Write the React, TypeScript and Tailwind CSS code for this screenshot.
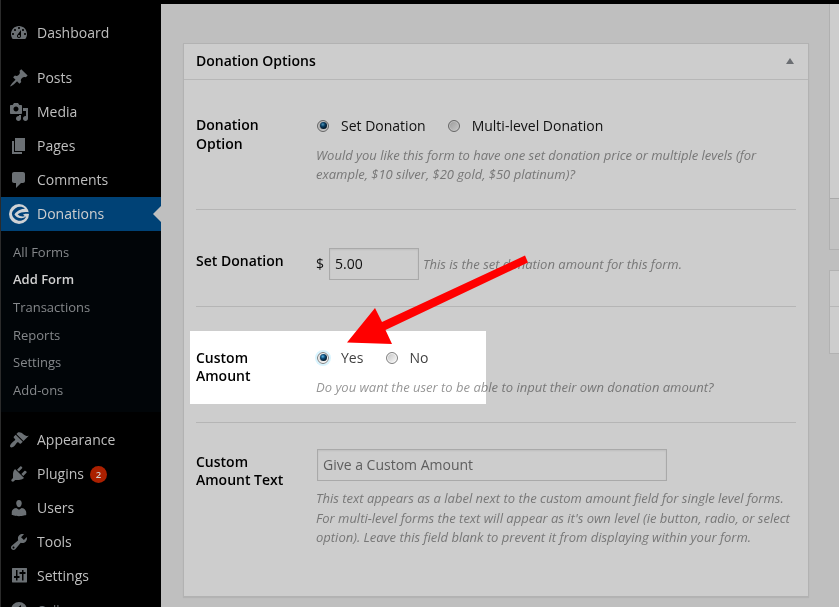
import type { ReactNode } from 'react';

const icons = {
  dashboard:
    'M3.76 16h12.48c1.1-1.37 1.76-3.11 1.76-5 0-4.42-3.58-8-8-8s-8 3.58-8 8c0 1.89.66 3.63 1.76 5zM10 4c.55 0 1 .45 1 1s-.45 1-1 1-1-.45-1-1 .45-1 1-1zM6 6c.55 0 1 .45 1 1s-.45 1-1 1-1-.45-1-1 .45-1 1-1zm8 0c.55 0 1 .45 1 1s-.45 1-1 1-1-.45-1-1 .45-1 1-1zm-5.37 5.55L12 7v6c0 1.1-.9 2-2 2s-2-.9-2-2c0-.57.24-1.08.63-1.45zM4 10c.55 0 1 .45 1 1s-.45 1-1 1-1-.45-1-1 .45-1 1-1zm12 0c.55 0 1 .45 1 1s-.45 1-1 1-1-.45-1-1 .45-1 1-1zm-5 3c0-.55-.45-1-1-1s-1 .45-1 1 .45 1 1 1 1-.45 1-1z',
  posts:
    'M10.44 3.02l1.82-1.82 6.36 6.35-1.83 1.82c-1.05-.68-2.48-.57-3.41.36l-.75.75c-.92.93-1.04 2.35-.35 3.41l-1.83 1.82-2.41-2.41-2.8 2.79c-.42.42-3.38 2.71-3.8 2.29s1.86-3.39 2.28-3.81l2.79-2.79L4.1 9.36l1.83-1.82c1.05.69 2.48.57 3.4-.36l.75-.75c.93-.92 1.05-2.35.36-3.41z',
  media:
    'M13 11V4c0-.55-.45-1-1-1h-1.67L9 1H5L3.67 3H2c-.55 0-1 .45-1 1v7c0 .55.45 1 1 1h10c.55 0 1-.45 1-1zM7 4.5c1.38 0 2.5 1.12 2.5 2.5S8.38 9.5 7 9.5 4.5 8.38 4.5 7 5.62 4.5 7 4.5zM14 6h5v10.5c0 1.38-1.12 2.5-2.5 2.5S14 17.88 14 16.5s1.12-2.5 2.5-2.5c.17 0 .34.02.5.05V9h-3V6zm-4 8.05V13h2v3.5c0 1.38-1.12 2.5-2.5 2.5S7 17.88 7 16.5 8.12 14 9.5 14c.17 0 .34.02.5.05z',
  pages: 'M6 15V2h10v13H6zm-1 1h8v2H3V5h2v11z',
  comments:
    'M5 2h9c1.1 0 2 .9 2 2v7c0 1.1-.9 2-2 2h-2l-5 5v-5H5c-1.1 0-2-.9-2-2V4c0-1.1.9-2 2-2z',
  appearance:
    'M14.48 11.06L7.41 3.99l1.5-1.5c.5-.56 2.3-.47 3.51.32 1.21.8 1.43 1.28 2.91 2.1 1.18.64 2.45 1.26 4.45.85zm-.71.71L6.7 4.7 4.93 6.47c-.39.39-.39 1.02 0 1.41l1.06 1.06c.39.39.39 1.03 0 1.42-.6.6-1.43 1.11-2.21 1.69-.35.26-.7.53-1.01.84C1.43 14.23.4 16.08 1.4 17.07c.99 1 2.84-.03 4.18-1.36.31-.31.58-.66.85-1.02.57-.78 1.08-1.61 1.69-2.21.39-.39 1.02-.39 1.41 0l1.06 1.06c.39.39 1.02.39 1.41 0z',
  plugins:
    'M13.11 4.36L9.87 7.6 8 5.73l3.24-3.24c.35-.34 1.05-.2 1.56.32.52.51.66 1.21.31 1.55zm-8 1.77l.91-1.12 9.01 9.01-1.19.84c-.71.71-2.63 1.16-3.82 1.16H6.14L4.9 17.26c-.59.59-1.54.59-2.12 0-.59-.58-.59-1.53 0-2.12l1.24-1.24v-3.88c0-1.13.4-3.19 1.09-3.89zm7.26 3.97l3.24-3.24c.34-.35 1.04-.21 1.55.31.52.51.66 1.21.31 1.55l-3.24 3.25z',
  users:
    'M10 9.25c-2.27 0-2.73-3.44-2.73-3.44C7 4.02 7.82 2 9.97 2c2.16 0 2.98 2.02 2.71 3.81 0 0-.41 3.44-2.68 3.44zm0 2.57L12.72 10c2.39 0 4.52 2.33 4.52 4.53v2.49s-3.65 1.13-7.24 1.13c-3.65 0-7.24-1.13-7.24-1.13v-2.49c0-2.25 1.94-4.48 4.47-4.48z',
  tools:
    'M16.68 9.77c-1.34 1.34-3.3 1.67-4.95.99l-5.41 6.52c-.99.99-2.59.99-3.58 0s-.99-2.59 0-3.57l6.52-5.42c-.68-1.65-.35-3.61.99-4.95 1.28-1.28 3.12-1.62 4.72-1.06l-2.89 2.89 2.82 2.82 2.86-2.87c.53 1.58.18 3.39-1.08 4.65zM3.81 16.21c.4.39 1.04.39 1.43 0 .4-.4.4-1.04 0-1.43-.39-.4-1.03-.4-1.43 0-.39.39-.39 1.03 0 1.43z',
  settings:
    'M3.500 2h14c.28 0 .5.22.5.5v13.500c0 .28-.22.5-.5.5h-14c-.28 0-.5-.22-.5-.5V2.500c0-.28.22-.5.5-.5zM7 4v6H5v2h2v2.500h1.500V12h2v-2h-2V4zM13 4v2h-2.500v2H13v6.500h1.500V8h2V6h-2V4z',
  collapse: 'M10 2a8 8 0 1 1 0 16 8 8 0 0 1 0-16zM12 5l-6 5 6 5z',
};

function Glyph({ d }: { d: string }) {
  return (
    <svg viewBox="0 0 20 20" className="h-5 w-5 shrink-0 fill-[#6b7074]">
      <path fillRule="evenodd" d={d} />
    </svg>
  );
}

function GiveLogo() {
  return (
    <svg viewBox="0 0 20 20" className="h-5 w-5 shrink-0">
      <circle cx="10" cy="10" r="10" fill="#cfd2d5" />
      <path
        d="M16 4.800C13.500 2.400 9.500 2.200 6.500 4.200 3.500 6.200 2.300 9 3.200 11.300 4.500 14.800 8 17.300 12 16.700 14.500 16.300 16.500 14.500 17.200 12.300 15 14.500 11.500 14.800 8.800 13.500 6.800 12.500 5.700 11.300 5.500 10.300 6.800 8 9.300 6.200 12 5.400 13.500 5 15 4.900 16 4.800z"
        fill="#00427a"
      />
      <path d="M20 8.300C15.500 7.700 11.500 8.300 8.700 10.200 10.500 12.300 13.500 12.900 16.300 12 15.500 11.800 14.500 11.200 14 10.400 16 9.900 18 9.800 20 9.900z" fill="#00427a" />
    </svg>
  );
}

function MenuItem({ icon, label, badge }: { icon: string; label: string; badge?: string }) {
  return (
    <li className="flex h-[34px] items-center gap-2 pl-2 text-[14px] leading-[18px] text-[#bfbfbf]">
      <Glyph d={icon} />
      <span>{label}</span>
      {badge && (
        <span className="-ml-0.5 flex h-[17px] w-[17px] items-center justify-center rounded-full bg-[#ab2000] text-[9.5px] leading-[17px] font-semibold text-[#d0d0d0]">
          {badge}
        </span>
      )}
    </li>
  );
}

function Radio({ checked, glow }: { checked?: boolean; glow?: boolean }) {
  return (
    <span
      className={
        'flex h-3 w-3 shrink-0 items-center justify-center rounded-full border border-[#666] bg-linear-to-br from-[#999] to-[#cacaca] shadow-[inset_0_0_0_1px_#c4c4c4] ' +
        (glow ? 'outline-2 outline-[#86b5cc]/45' : '')
      }
    >
      {checked && (
        <span className="h-[7px] w-[7px] rounded-full bg-[radial-gradient(circle_at_40%_35%,#4a93b8_0%,#083c60_35%,#000c16_80%)]" />
      )}
    </span>
  );
}

function Row({ label, className, children }: { label: ReactNode; className: string; children: ReactNode }) {
  return (
    <div className={'mx-3 flex ' + className}>
      <div className="w-[120px] shrink-0 text-[14px] leading-[18.2px] font-semibold text-black">{label}</div>
      <div className="min-w-0 flex-1 text-[14px] leading-[19px] text-[#111]">{children}</div>
    </div>
  );
}

const subItems = ['All Forms', 'Add Form', 'Transactions', 'Reports', 'Settings', 'Add-ons'];

export default function App() {
  return (
    <div className="relative flex h-[607px] w-[839px] overflow-hidden bg-black font-['Open_Sans','Noto_Sans',sans-serif]">
      <nav className="h-full w-[161px] shrink-0 border-l border-[#2b2b2b] bg-black pt-4">
        <ul>
          <MenuItem icon={icons.dashboard} label="Dashboard" />
          <li className="h-[11px]" />
          <MenuItem icon={icons.posts} label="Posts" />
          <MenuItem icon={icons.media} label="Media" />
          <MenuItem icon={icons.pages} label="Pages" />
          <MenuItem icon={icons.comments} label="Comments" />
          <li>
            <div className="flex h-[34px] items-center gap-2 bg-[#004276] pl-2 text-[14px] leading-[18px] text-[#cfcfcf]">
              <GiveLogo />
              <span className="flex-1">Donations</span>
              <span className="h-0 w-0 border-y-8 border-r-8 border-y-transparent border-r-[#bfbfbf]" />
            </div>
            <ul className="h-[181px] bg-[#010508] pt-[7px] pl-3">
              {subItems.map((t) => (
                <li
                  key={t}
                  className={
                    'text-[13px] leading-[28px] ' +
                    (t === 'All Forms' || t === 'Reports' ? 'h-[27px] ' : 'h-7 ') +
                    (t === 'Add Form' ? 'font-semibold text-[#d0d0d0]' : 'text-[#85888b]')
                  }
                >
                  {t}
                </li>
              ))}
            </ul>
          </li>
          <li className="h-[11px]" />
          <MenuItem icon={icons.appearance} label="Appearance" />
          <MenuItem icon={icons.plugins} label="Plugins" badge="2" />
          <MenuItem icon={icons.users} label="Users" />
          <MenuItem icon={icons.tools} label="Tools" />
          <MenuItem icon={icons.settings} label="Settings" />
          <li className="flex h-[33px] items-center gap-2 pl-2 text-[13px] leading-[18px] text-[#6b7074]">
            <Glyph d={icons.collapse} />
            <span>Collapse menu</span>
          </li>
        </ul>
      </nav>

      <main className="mt-1 flex flex-1 bg-[#bfbfbf] pl-[22px]">
        <section className="mt-[39px] h-[554px] w-[626px] shrink-0 border border-[#b2b2b2] bg-[#cdcdcd] shadow-[0_1px_1px_rgba(0,0,0,.06)]">
          <header className="flex h-9 items-center justify-between border-b border-[#b7b7b7] pr-[14px] pb-px pl-3">
            <h2 className="text-[14px] leading-[18px] font-semibold text-black">Donation Options</h2>
            <span className="h-0 w-0 border-x-4 border-b-[6px] border-x-transparent border-b-[#6b6e72]" />
          </header>

          <Row
            className="h-[130px] border-b border-[#b5b5b5] pt-9"
            label={
              <>
                <span className="block h-[19px]">Donation</span>
                <span className="block">Option</span>
              </>
            }
          >
            <div className="flex items-center pl-px">
              <Radio checked />
              <span className="ml-3">Set Donation</span>
              <span className="ml-[22px]"><Radio /></span>
              <span className="ml-3">Multi-level Donation</span>
            </div>
            <p className="mt-[11px] text-[13px] text-[#777] italic">
              Would you like this form to have one set donation price or multiple levels (for
              <br />
              example, $10 silver, $20 gold, $50 platinum)?
            </p>
          </Row>

          <Row className="h-[97px] border-b border-[#b5b5b5] pt-[42px]" label="Set Donation">
            <div className="-mt-1 flex items-center">
              <span className="w-[13px] pb-0.5">$</span>
              <span className="flex h-8 w-[90px] items-center border border-[#a9a9a9] pb-0.5 pl-[5px] shadow-[inset_0_1px_2px_rgba(0,0,0,.07)]">
                5.00
              </span>
              <span className="ml-1 text-[13px] text-[#777] italic">
                This is the set donation amount for this form.
              </span>
            </div>
          </Row>

          <Row className="h-[116px] border-b border-[#b5b5b5] pt-[42px]" label={<>Custom<br />Amount</>}>
            <div className="-mt-px flex items-center pl-px text-[#333]">
              <Radio checked glow />
              <span className="ml-3">Yes</span>
              <span className="ml-[23px]"><Radio /></span>
              <span className="ml-[11px]">No</span>
            </div>
            <p className="mt-[11px] text-[13px] text-[#777] italic">
              Do you want the user to be able to input their own donation amount?
            </p>
          </Row>

          <Row className="pt-[30px]" label={<>Custom<br />Amount Text</>}>
            <div className="-mt-1 ml-px flex h-8 w-[350px] items-center border border-[#a9a9a9] pb-0.5 pl-[5px] text-[#5e5e5e] shadow-[inset_0_1px_2px_rgba(0,0,0,.07)]">
              Give a Custom Amount
            </div>
            <p className="mt-2 text-[13px] leading-[19.5px] text-[#777] italic">
              This text appears as a label next to the custom amount field for single level forms.
              <br />
              For multi-level forms the text will appear as it's own level (ie button, radio, or select
              <br />
              option). Leave this field blank to prevent it from displaying within your form.
            </p>
          </Row>
        </section>

        <aside className="ml-5 flex-1">
          <div className="h-[246px] border-b border-l border-[#b0b0b0] bg-[#c3c3c3]">
            <div className="h-[195px] border-b border-[#a9a9a9] bg-[#cdcdcd]" />
          </div>
          <div className="mt-5 h-[84px] border-y border-l border-[#b2b2b2] bg-[#cdcdcd]">
            <div className="h-9 border-b border-[#b7b7b7]" />
          </div>
        </aside>
      </main>

      {/* Spotlight: lifts the dimmed page back to full brightness */}
      <div className="absolute top-[331px] left-[190px] h-[73px] w-[296px] bg-[#343434] mix-blend-color-dodge" />

      {/* Pointer arrow */}
      <svg className="absolute top-[250px] left-[340px] h-[100px] w-[195px]" viewBox="340 250 195 100">
        <polygon points="347,342.500 375,308 382,322 525,255.500 528,262.500 385.500,330 392,344" fill="#f00" />
      </svg>
    </div>
  );
}
